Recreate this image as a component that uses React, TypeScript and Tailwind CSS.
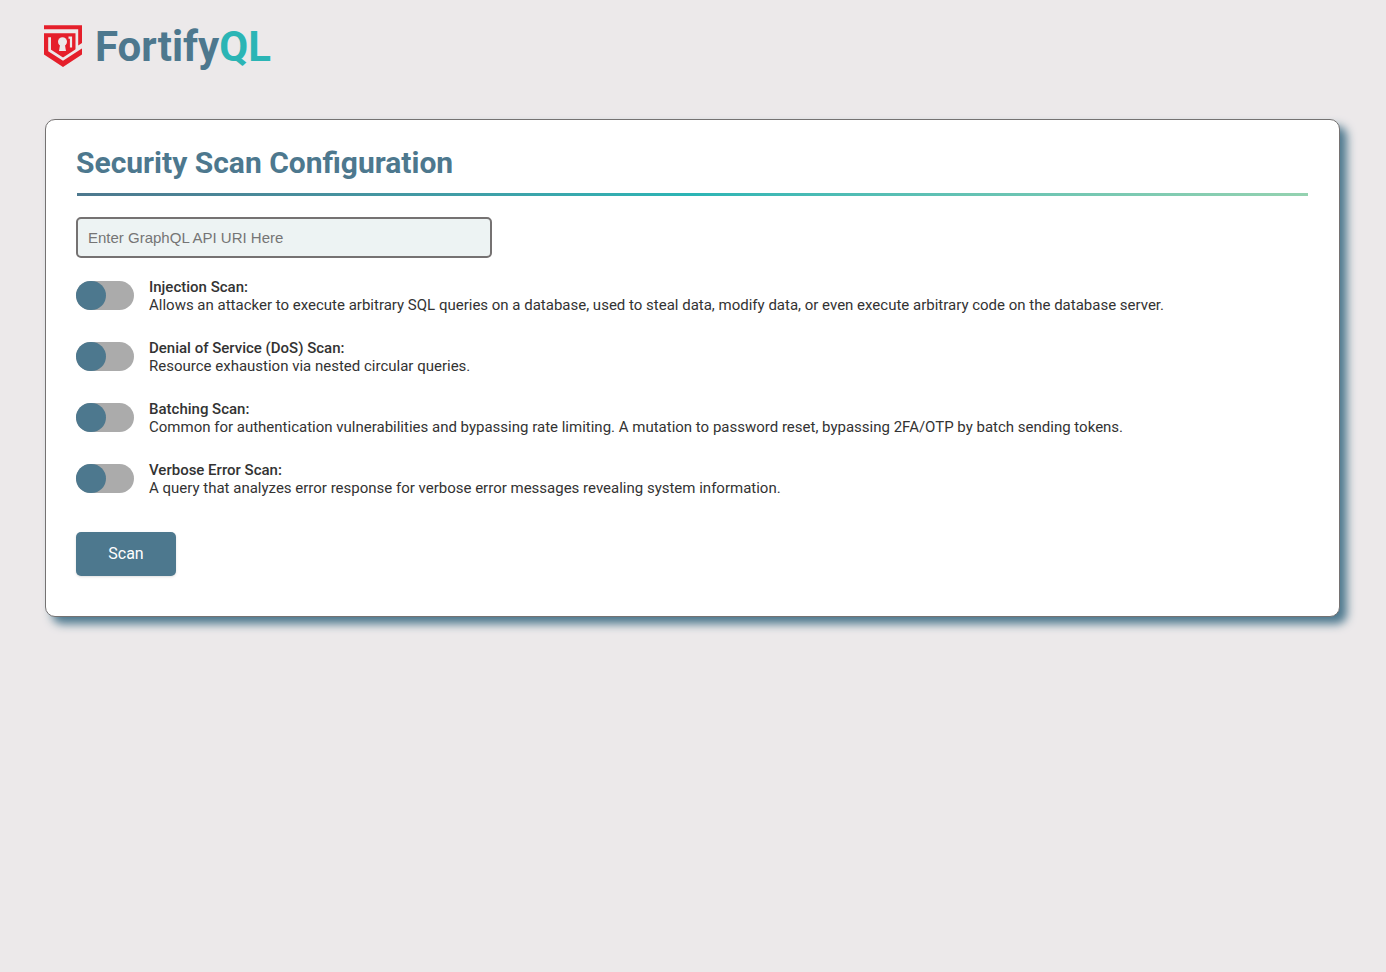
const scans = [
  {
    id: "injection",
    title: "Injection Scan:",
    text: "Allows an attacker to execute arbitrary SQL queries on a database, used to steal data, modify data, or even execute arbitrary code on the database server.",
  },
  {
    id: "dos",
    title: "Denial of Service (DoS) Scan:",
    text: "Resource exhaustion via nested circular queries.",
  },
  {
    id: "batching",
    title: "Batching Scan:",
    text: "Common for authentication vulnerabilities and bypassing rate limiting. A mutation to password reset, bypassing 2FA/OTP by batch sending tokens.",
  },
  {
    id: "verbose",
    title: "Verbose Error Scan:",
    text: "A query that analyzes error response for verbose error messages revealing system information.",
  },
];

function ShieldLogo() {
  return (
    <svg viewBox="0 0 40 44" className="mt-0.5 h-11 w-10 shrink-0" aria-hidden="true">
      <path d="M1 1.3H39V19L35.200 21.500V5.200H1Z" fill="#e51f2b" />
      <path d="M1 9.300H32.500V26L39 23.800V30.500L20 43L1 30.500Z" fill="#e51f2b" />
      <path d="M6.600 13.300V26.500L20 35.200L40 22.200" fill="none" stroke="#ece9ea" strokeWidth="2.800" />
      <path d="M25.500 13.600H28V23.500" fill="none" stroke="#ece9ea" strokeWidth="2.200" />
      <circle cx="19.500" cy="17.700" r="4.500" fill="#ece9ea" />
      <path d="M17.400 19H21.600L23 27H16Z" fill="#ece9ea" />
    </svg>
  );
}

function ScanOption({ id, title, text }: { id: string; title: string; text: string }) {
  return (
    <label htmlFor={id} className="flex cursor-pointer items-start gap-[15px]">
      <input id={id} type="checkbox" className="peer sr-only" />
      <span className="mt-[3px] flex h-[29px] w-[58px] shrink-0 justify-start rounded-full bg-[#ababab] peer-checked:justify-end peer-focus-visible:outline-2">
        <span className="h-full w-[30px] rounded-full bg-[#4d788e]" />
      </span>
      <span className="text-[15px] leading-[18px] text-[#333]">
        <span className="block font-medium">{title}</span>
        <span className="block">{text}</span>
      </span>
    </label>
  );
}

export default function App() {
  return (
    <div className="min-h-screen bg-[#ece9ea] font-['Roboto',sans-serif]">
      <header className="flex items-start gap-3 px-[43px] pt-[22px]">
        <ShieldLogo />
        <span className="text-[42px] leading-[50px] font-bold text-[#4d788e]">
          Fortify<span className="text-[#2bb5b5]">QL</span>
        </span>
      </header>
      <main className="mt-[47px] mr-[46px] ml-[45px] rounded-[10px] border border-[#757272] bg-white px-[30px] pt-[25px] pb-10 shadow-[7px_7px_10px_#4d788e]">
        <h1 className="text-[30px] leading-9 font-bold text-[#4d788e]">Security Scan Configuration</h1>
        <div className="mx-px mt-3 h-[3px] bg-linear-to-r from-[#4d788e] via-[#2bb5b5] to-[#94d2b0]" />
        <form>
          <input
            type="text"
            aria-label="GraphQL API URI"
            placeholder="Enter GraphQL API URI Here"
            className="mt-[21px] block h-[41px] w-[416px] max-w-full rounded-[5px] border-2 border-[#757272] bg-[#edf3f3] px-[10px] font-['Liberation_Sans',sans-serif] text-[15px] placeholder:text-[#757575]"
          />
          <div className="mt-5 flex flex-col gap-[25px]">
            {scans.map((scan) => (
              <ScanOption key={scan.id} {...scan} />
            ))}
          </div>
          <button
            type="button"
            className="mt-[35px] block h-11 w-[100px] rounded-[5px] bg-[#4d788e] text-base text-white shadow-sm"
          >
            Scan
          </button>
        </form>
      </main>
    </div>
  );
}
